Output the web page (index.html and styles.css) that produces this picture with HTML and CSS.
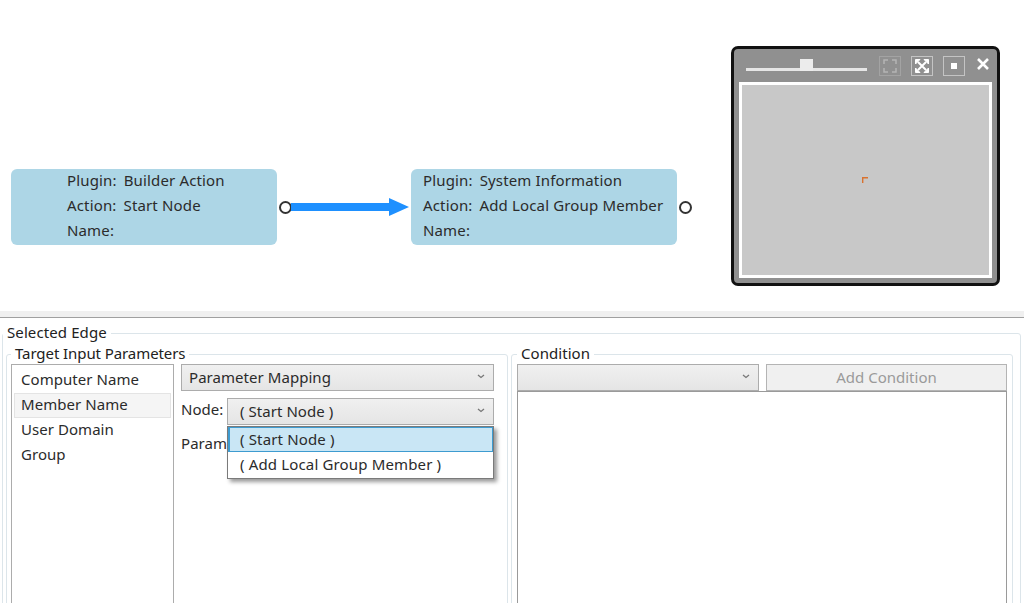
FILE: index.html
```html
<!DOCTYPE html>
<html lang="en">

<head>
    <meta charset="UTF-8">
    <title>Selected Edge</title>
    <link rel="stylesheet" href="styles.css">
</head>

<body>
    <!-- Graph canvas -->
    <div class="canvas">
        <div class="node node-start">
            <div class="node-row"><span class="node-key">Plugin:</span><span>Builder Action</span></div>
            <div class="node-row"><span class="node-key">Action:</span><span>Start Node</span></div>
            <div class="node-row"><span class="node-key">Name:</span></div>
        </div>
        <div class="port port-start"></div>

        <svg class="edge" width="120" height="20" viewBox="0 0 120 20">
            <path d="M0 6H98V1L118 10L98 19V14H0Z" fill="#1e90ff" />
        </svg>

        <div class="node node-target">
            <div class="node-row"><span class="node-key">Plugin:</span><span>System Information</span></div>
            <div class="node-row"><span class="node-key">Action:</span><span>Add Local Group Member</span></div>
            <div class="node-row"><span class="node-key">Name:</span></div>
        </div>
        <div class="port port-target"></div>

        <!-- Zoom window -->
        <div class="zoombox">
            <div class="zoombox-bar">
                <div class="slider"><span class="slider-thumb"></span></div>
                <span class="zoom-btn zoom-btn-off">
                    <svg width="14" height="14" viewBox="0 0 14 14" fill="none" stroke="#b4b4b4" stroke-width="1.5">
                        <path d="M1 5V1H5M9 1H13V5M13 9V13H9M5 13H1V9" />
                    </svg>
                </span>
                <span class="zoom-btn">
                    <svg width="16" height="16" viewBox="0 0 16 16" fill="#fff" stroke="#fff" stroke-width="2">
                        <path d="M4 4L12 12M12 4L4 12" />
                        <path d="M1.5 1.5H6L1.5 6ZM14.5 1.5V6L10 1.5ZM14.5 14.5H10L14.5 10ZM1.5 14.5V10L6 14.5Z" stroke-width="1" />
                    </svg>
                </span>
                <span class="zoom-btn"><span class="zoom-dot"></span></span>
                <svg class="zoom-close" width="14" height="14" viewBox="0 0 14 14" fill="none" stroke="#fff" stroke-width="2.6">
                    <path d="M2 2L12 12M12 2L2 12" />
                </svg>
            </div>
            <div class="zoombox-view">
                <svg class="zoom-mark" width="6" height="6" viewBox="0 0 6 6" fill="none" stroke="#d9722f" stroke-width="1.4">
                    <path d="M.7 6V.7H6" />
                </svg>
            </div>
        </div>
    </div>

    <div class="splitter"></div>

    <!-- Edge properties -->
    <fieldset class="edge-panel">
        <legend>Selected Edge</legend>
        <div class="edge-columns">
            <fieldset class="group group-params">
                <legend>Target Input Parameters</legend>
                <div class="group-params-body">
                    <ul class="param-list">
                        <li>Computer Name</li>
                        <li class="selected">Member Name</li>
                        <li>User Domain</li>
                        <li>Group</li>
                    </ul>
                    <div class="mapping">
                        <div class="combo">
                            <span>Parameter Mapping</span>
                            <svg class="chevron" width="8" height="5" viewBox="0 0 8 5" fill="none" stroke="#777" stroke-width="1.3"><path d="M1 1L4 3.5L7 1" /></svg>
                        </div>
                        <div class="mapping-row">
                            <label class="mapping-label">Node:</label>
                            <div class="combo combo-node">
                                <span>( Start Node )</span>
                                <svg class="chevron" width="8" height="5" viewBox="0 0 8 5" fill="none" stroke="#777" stroke-width="1.3"><path d="M1 1L4 3.5L7 1" /></svg>
                                <ul class="combo-menu">
                                    <li class="active">( Start Node )</li>
                                    <li>( Add Local Group Member )</li>
                                </ul>
                            </div>
                        </div>
                        <div class="mapping-row mapping-param">
                            <label class="mapping-label">Param</label>
                        </div>
                    </div>
                </div>
            </fieldset>

            <fieldset class="group group-condition">
                <legend>Condition</legend>
                <div class="condition-bar">
                    <div class="combo">
                        <span></span>
                        <svg class="chevron" width="8" height="5" viewBox="0 0 8 5" fill="none" stroke="#777" stroke-width="1.3"><path d="M1 1L4 3.5L7 1" /></svg>
                    </div>
                    <button type="button" disabled>Add Condition</button>
                </div>
                <div class="condition-text"></div>
            </fieldset>
        </div>
    </fieldset>
</body>

</html>
```

FILE: styles.css
```css
html,
body {
    height: 603px;
    overflow: hidden;
}

body {
    margin: 0;
    background-color: white;
    font-family: "Noto Sans", sans-serif;
    font-size: 15px;
    letter-spacing: 0.05px;
    color: #2b2b2b;
}

/* Canvas */
.canvas {
    position: relative;
    height: 311px;
}

.node {
    position: absolute;
    top: 169px;
    width: 266px;
    height: 76px;
    box-sizing: border-box;
    border-radius: 6px;
    background-color: #add6e6;
    font-size: 15px;
    letter-spacing: 0.15px;
}

.node-start {
    left: 11px;
    padding-left: 56px;
}

.node-target {
    left: 411px;
    padding-left: 12px;
}

.node-row {
    display: flex;
    gap: 7px;
    height: 25px;
    line-height: 22px;
}

.port {
    position: absolute;
    top: 201px;
    width: 13px;
    height: 13px;
    box-sizing: border-box;
    border: 2px solid #333;
    border-radius: 50%;
    background-color: white;
}

.port-start {
    left: 279px;
}

.port-target {
    left: 679px;
}

.edge {
    position: absolute;
    left: 291px;
    top: 197px;
}

/* Zoom window */
.zoombox {
    position: absolute;
    left: 731px;
    top: 46px;
    width: 269px;
    height: 240px;
    box-sizing: border-box;
    padding: 0 5px 5px 5px;
    border: 3px solid #111;
    border-radius: 7px;
    background-color: #909090;
    display: flex;
    flex-direction: column;
}

.zoombox-bar {
    display: flex;
    align-items: center;
    height: 33px;
    flex-shrink: 0;
}

.slider {
    position: relative;
    width: 121px;
    height: 3px;
    margin: 7px 12px 0 7px;
    background-color: #e6e6e6;
}

.slider-thumb {
    position: absolute;
    left: 54px;
    top: -9px;
    width: 13px;
    height: 12px;
    background-color: #ececec;
}

.zoom-btn {
    display: flex;
    align-items: center;
    justify-content: center;
    width: 22px;
    height: 20px;
    box-sizing: border-box;
    margin-right: 10px;
    border: 1px solid #c4c4c4;
}

.zoom-btn-off {
    border-color: #a3a3a3;
}

.zoom-dot {
    width: 6px;
    height: 6px;
    background-color: white;
}

.zoom-close {
    margin: -3px 0 0 1px;
}

.zoombox-view {
    position: relative;
    flex: 1;
    border: 3px solid white;
    background-color: #c8c8c8;
}

.zoom-mark {
    position: absolute;
    left: 120px;
    top: 92px;
}

/* Splitter */
.splitter {
    height: 6px;
    background-color: #f0f0f0;
    border-bottom: 1px solid #a0a0a0;
}

/* Edge panel */
fieldset {
    margin: 0;
    min-width: 0;
    border: 1px solid #dce5ea;
    border-radius: 3px;
}

legend {
    padding: 0 4px 1px;
    line-height: 19px;
    color: #222;
}

.edge-panel {
    height: 400px;
    margin: 5px 3px 0 2px;
    padding: 1px 7px 0 3px;
}

.edge-panel>legend {
    margin-left: -3px;
    letter-spacing: 0.1px;
}

.edge-columns {
    display: grid;
    grid-template-columns: 502px 502px;
    gap: 3px;
}

.group {
    height: 320px;
}

.group-params {
    padding: 0 13px 0 4px;
}

.group-params>legend {
    letter-spacing: -0.08px;
}

.group-condition {
    padding: 0 5px;
}

.group-params-body {
    display: flex;
    gap: 7px;
}

.param-list {
    width: 163px;
    height: 300px;
    box-sizing: border-box;
    margin: 0;
    padding: 3px 2px;
    list-style: none;
    border: 1px solid #acacac;
}

.param-list li {
    height: 25px;
    box-sizing: border-box;
    padding-left: 6px;
    line-height: 20px;
    border: 1px solid transparent;
}

.param-list li.selected {
    background-color: #f5f5f5;
    border-color: #e4e4e4;
}

.mapping {
    flex: 1;
    min-width: 0;
}

.combo {
    position: relative;
    display: flex;
    align-items: center;
    justify-content: space-between;
    height: 27px;
    box-sizing: border-box;
    padding: 0 8px 2px 7px;
    border: 1px solid #acacac;
    background: linear-gradient(#f0f0f0, #e5e5e5);
}

.chevron {
    flex-shrink: 0;
}

.mapping-row {
    display: flex;
    align-items: center;
    margin-top: 7px;
}

.mapping-label {
    width: 46px;
    flex-shrink: 0;
    margin-top: -6px;
    white-space: nowrap;
}

.combo-node {
    flex: 1;
    padding-left: 12px;
}

.mapping-param {
    margin-top: 14px;
}

.combo-menu {
    position: absolute;
    z-index: 2;
    left: -1px;
    right: -1px;
    top: 27px;
    height: 53px;
    box-sizing: border-box;
    margin: 0;
    padding: 0;
    list-style: none;
    border: 1px solid #7a7a7a;
    background-color: white;
    box-shadow: 3px 3px 4px rgba(0, 0, 0, 0.4);
    letter-spacing: 0.15px;
}

.combo-menu li {
    height: 25px;
    box-sizing: border-box;
    padding-left: 11px;
    line-height: 22px;
    border: 1px solid transparent;
}

.combo-menu li.active {
    padding-left: 10px;
    background-color: #c9e6f5;
    border: 2px solid #3e9bd0;
    border-width: 1px 1px 1px 2px;
}

.condition-bar {
    display: flex;
    gap: 7px;
}

.condition-bar .combo {
    width: 242px;
}

.condition-bar button {
    flex: 1;
    height: 27px;
    padding: 0 0 2px;
    border: 1px solid #b4b4b4;
    background-color: #f0f0f0;
    color: #9a9a9a;
    font: inherit;
}

.condition-text {
    height: 280px;
    box-sizing: border-box;
    border: 1px solid #9a9a9a;
    background-color: white;
}
```
